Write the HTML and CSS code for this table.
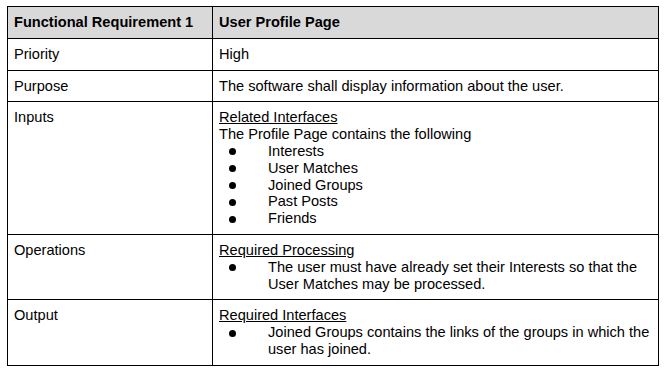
FILE: index.html
```html
<!DOCTYPE html>
<html>
<head>
<meta charset="utf-8">
<link rel="stylesheet" href="styles.css">
</head>
<body>
<table class="req">
  <tr class="head">
    <th class="c1">Functional Requirement 1</th>
    <th class="c2">User Profile Page</th>
  </tr>
  <tr>
    <td>Priority</td>
    <td>High</td>
  </tr>
  <tr>
    <td>Purpose</td>
    <td>The software shall display information about the user.</td>
  </tr>
  <tr>
    <td>Inputs</td>
    <td>
      <div class="u">Related Interfaces</div>
      <div>The Profile Page contains the following</div>
      <ul class="list">
        <li>Interests</li>
        <li>User Matches</li>
        <li>Joined Groups</li>
        <li>Past Posts</li>
        <li>Friends</li>
      </ul>
    </td>
  </tr>
  <tr>
    <td>Operations</td>
    <td>
      <div class="u">Required Processing</div>
      <ul class="list">
        <li>The user must have already set their Interests so that the User Matches may be processed.</li>
      </ul>
    </td>
  </tr>
  <tr>
    <td>Output</td>
    <td>
      <div class="u">Required Interfaces</div>
      <ul class="list">
        <li>Joined Groups contains the links of the groups in which the user has joined.</li>
      </ul>
    </td>
  </tr>
</table>
</body>
</html>
```
FILE: styles.css
```css
html, body {
  margin: 0;
  padding: 0;
  background: #ffffff;
}
body {
  padding: 6px 0 0 7px;
  font-family: "Liberation Sans", Arial, sans-serif;
  font-size: 14.6px;
  line-height: 16.8px;
  color: #000000;
}
.req {
  border-collapse: collapse;
  width: 652px;
  table-layout: fixed;
}
.req th, .req td {
  border: 1px solid #000000;
  padding: 7px 6px 7px 6px;
  text-align: left;
  vertical-align: top;
}
.req .c1 {
  width: 192px;
}
.head th {
  background: #d9d9d9;
  font-weight: bold;
}
.u {
  text-decoration: underline;
}
.list {
  margin: 0;
  padding: 0 0 0 49px;
  list-style: none;
}
.list li {
  position: relative;
}
.list li::before {
  content: "";
  position: absolute;
  left: -39px;
  top: 5.5px;
  width: 7px;
  height: 7px;
  border-radius: 50%;
  background: #000000;
}
```
